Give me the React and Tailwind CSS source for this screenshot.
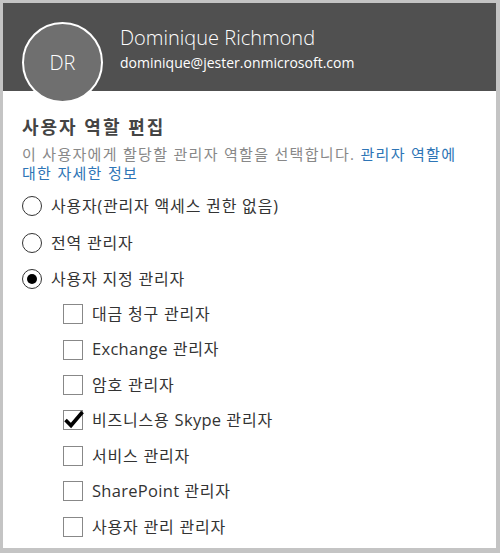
import React from "react";

const font = { fontFamily: '"Open Sans", "Noto Sans CJK KR", sans-serif' };

function Label({ children }) {
  return <span className="ml-[9px] text-[16px] tracking-[0.8px] text-[#333] whitespace-nowrap">{children}</span>;
}

function Latin({ children }) {
  return <span className="text-[16.5px] tracking-[0.3px]">{children}</span>;
}

function Radio({ checked, label }) {
  return (
    <div className="flex items-center h-[36.5px]">
      <div className="w-[20px] h-[20px] rounded-full border border-[#333] flex items-center justify-center bg-white shrink-0">
        {checked && <div className="w-[10px] h-[10px] rounded-full bg-black" />}
      </div>
      <Label>{label}</Label>
    </div>
  );
}

function Check({ checked, label }) {
  return (
    <div className="flex items-center h-[35.4px]">
      <div className="w-[20px] h-[20px] border border-[#888] bg-white relative shrink-0">
        {checked && (
          <svg viewBox="0 0 22 22" className="absolute left-[-1px] top-[-3px] w-[22px] h-[22px] overflow-visible">
            <path d="M2.5 12 L8 17.5 L19.5 4" fill="none" stroke="#000" strokeWidth="3.6" strokeLinecap="butt" strokeLinejoin="miter" />
          </svg>
        )}
      </div>
      <Label>{label}</Label>
    </div>
  );
}

export default function App() {
  return (
    <div className="w-[500px] h-[553px] bg-[#c4c4c4] pt-[3px] pl-[3px] pr-[4px] pb-[5px]" style={font}>
      <div className="relative w-full h-full bg-white overflow-hidden">
        <div className="h-[88px] bg-[#505050] pl-[117px] pt-[22px] text-white">
          <div className="text-[20px] font-light leading-[26px]">Dominique Richmond</div>
          <div className="text-[14px] leading-[20px] mt-[2px]">dominique@jester.onmicrosoft.com</div>
        </div>
        <div className="absolute left-[19px] top-[19px] w-[81px] h-[81px] rounded-full border-2 border-white bg-[#6f6f6f] flex items-center justify-center">
          <span className="text-white text-[20px] font-light">DR</span>
        </div>
        <div className="pl-[19px] pr-[10px] pt-[24px]">
          <div className="text-[18px] font-bold text-[#444] leading-[24px] tracking-[2px]">사용자 역할 편집</div>
          <div className="mt-[6px] text-[15px] leading-[19px] text-[#888] tracking-[1.3px] whitespace-nowrap">
            이 사용자에게 할당할 관리자 역할을 선택합니다.{" "}
            <span className="text-[#2e75b6]">관리자 역할에</span>
            <br />
            <span className="text-[#2e75b6]">대한 자세한 정보</span>
          </div>
          <div className="mt-[5px]">
            <Radio label="사용자(관리자 액세스 권한 없음)" />
            <Radio label="전역 관리자" />
            <Radio checked label="사용자 지정 관리자" />
          </div>
          <div className="pl-[41px] -mt-[1px]">
            <Check label="대금 청구 관리자" />
            <Check label={<><Latin>Exchange</Latin> 관리자</>} />
            <Check label="암호 관리자" />
            <Check checked label={<>비즈니스용 <Latin>Skype</Latin> 관리자</>} />
            <Check label="서비스 관리자" />
            <Check label={<><Latin>SharePoint</Latin> 관리자</>} />
            <Check label="사용자 관리 관리자" />
          </div>
        </div>
      </div>
    </div>
  );
}
